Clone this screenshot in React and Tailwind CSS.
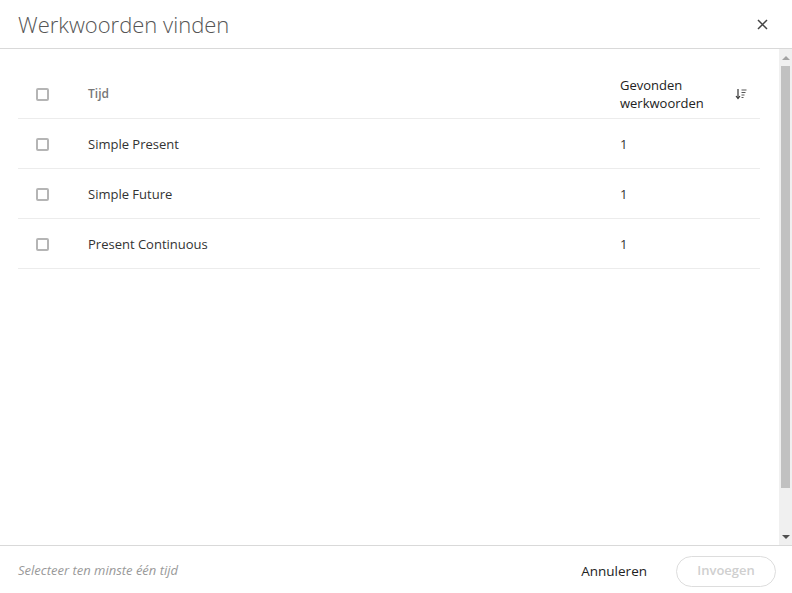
const rows = [
  { name: "Simple Present", count: 1 },
  { name: "Simple Future", count: 1 },
  { name: "Present Continuous", count: 1 },
];

const Box = () => (
  <span className="block w-[13px] h-[13px] border-2 border-[#b5b5b5] rounded-[2px] bg-white" />
);

const SortIcon = () => (
  <svg width="12" height="12" viewBox="0 0 12 12" fill="none">
    <path d="M3 1v9" stroke="#333" strokeWidth="1.2" />
    <path d="M1 8l2 2.5L5 8" stroke="#333" strokeWidth="1.2" fill="none" />
    <path d="M6.5 2h5M6.5 4.5h4M6.5 7h3M6.5 9.5h2" stroke="#555" strokeWidth="1" />
  </svg>
);

export default function App() {
  return (
    <div
      className="w-[792px] h-[593px] bg-white flex flex-col text-[#333]"
      style={{ fontFamily: '"Open Sans", sans-serif' }}
    >
      <div className="h-[49px] shrink-0 flex items-center justify-between pl-[18px] pr-[24px] pt-[1px] border-b border-[#d9d9d9]">
        <h1 className="text-[22px] font-light text-[#555]">Werkwoorden vinden</h1>
        <svg width="11" height="11" viewBox="0 0 11 11">
          <path d="M1 1l9 9M10 1l-9 9" stroke="#444" strokeWidth="1.5" />
        </svg>
      </div>

      <div className="flex flex-1 min-h-0">
        <div className="flex-1 pl-[18px] pr-[19px] pt-[21px]">
          <div className="flex h-[49px] border-b border-[#ececec]">
            <div className="w-[70px] flex items-center pl-[18px]">
              <Box />
            </div>
            <div className="flex-1 flex items-center text-[12px] font-semibold text-[#777]">Tijd</div>
            <div className="w-[140px] flex items-center text-[13px] leading-[18px] text-[#222]">
              <span className="w-[115px]">Gevonden werkwoorden</span>
              <SortIcon />
            </div>
          </div>
          {rows.map((r) => (
            <div key={r.name} className="flex h-[50px] pt-[2px] border-b border-[#ececec] text-[13px] text-[#333]">
              <div className="w-[70px] flex items-center pl-[18px]">
                <Box />
              </div>
              <div className="flex-1 flex items-center">{r.name}</div>
              <div className="w-[140px] flex items-center">{r.count}</div>
            </div>
          ))}
        </div>
        <div className="w-[13px] bg-[#f0f0f0] flex flex-col items-center">
          <div className="h-[17px] flex items-center justify-center">
            <span className="w-0 h-0 border-l-[4px] border-r-[4px] border-b-[4px] border-l-transparent border-r-transparent border-b-[#a3a3a3]" />
          </div>
          <div className="w-[9px] h-[422px] bg-[#c1c1c1]" />
          <div className="flex-1" />
          <div className="h-[17px] flex items-center justify-center">
            <span className="w-0 h-0 border-l-[4px] border-r-[4px] border-t-[4px] border-l-transparent border-r-transparent border-t-[#505050]" />
          </div>
        </div>
      </div>

      <div className="h-[48px] shrink-0 border-t border-[#d9d9d9] flex items-center justify-between pl-[18px] pr-[16px] pt-[3px]">
        <span className="text-[13px] italic text-[#999]">Selecteer ten minste één tijd</span>
        <div className="flex items-center gap-[29px]">
          <span className="text-[13.5px] text-[#222]">Annuleren</span>
          <button className="w-[100px] h-[31px] rounded-full border border-[#ddd] text-[13px] font-semibold text-[#cfcfcf]">
            Invoegen
          </button>
        </div>
      </div>
    </div>
  );
}
